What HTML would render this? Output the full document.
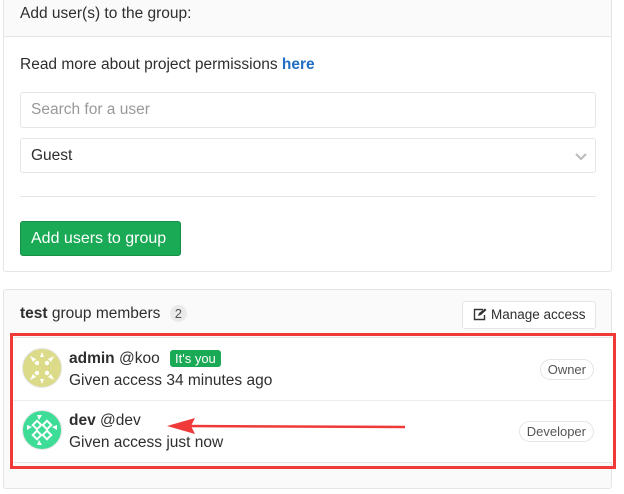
<!DOCTYPE html>
<html><head><style>
*{box-sizing:border-box;margin:0;padding:0}
body{width:624px;height:494px;background:#fff;font-family:"Liberation Sans",sans-serif;font-size:15.5px;color:#2e2e2e;position:relative;overflow:hidden}
.abs{position:absolute}
.card{position:absolute;left:3px;width:609px;border:1px solid #e5e5e5;border-radius:3px;background:#fff}
.hdr{background:#fafafa;border-bottom:1px solid #e5e5e5}
.inp{position:absolute;left:16px;width:576px;border:1px solid #e5e5e5;border-radius:3px;padding-left:10px;font-size:15.5px}
.badge{position:absolute;right:17px;border:1px solid #e5e5e5;border-radius:12px;font-size:13px;color:#555;padding:2px 7px;background:#fff}
</style></head><body>
<div class="card" style="top:-5px;height:277px">
  <div class="hdr" style="height:41px"><div class="abs" style="left:16px;top:9px">Add user(s) to the group:</div></div>
  <div class="abs" style="left:16px;top:60px">Read more about project permissions <b style="color:#1f6ec4">here</b></div>
  <div class="inp" style="top:96px;height:36px;line-height:34px;color:#999">Search for a user</div>
  <div class="inp" style="top:142px;height:35px;line-height:33px">Guest<svg class="abs" style="right:8px;top:13px" width="12" height="9" viewBox="0 0 12 9"><path d="M1 2l5 5 5-5" stroke="#bbb" stroke-width="2" fill="none"/></svg></div>
  <div class="abs" style="left:16px;top:200px;width:576px;border-top:1px solid #e5e5e5"></div>
  <div class="abs" style="left:16px;top:225px;width:161px;height:35px;background:#1aaa55;border:1px solid #168f48;border-radius:3px;color:#fff;line-height:33px;padding-left:10px;font-size:16px">Add users to group</div>
</div>
<div class="card" style="top:289px;height:200px;background:#fafafa">
  <div class="abs" style="left:16px;top:15px"><b>test</b> group members <span style="display:inline-block;background:#eaeaea;border-radius:9px;font-size:13px;padding:1px 5px;margin-left:5px;color:#555">2</span></div>
  <div class="abs" style="left:458px;top:11px;width:134px;height:28px;border:1px solid #e5e5e5;border-radius:3px;background:#fff;font-size:13.5px;line-height:26px;padding-left:28px">Manage access
    <svg class="abs" style="left:10px;top:6px" width="14" height="13" viewBox="0 0 14 13"><path d="M10 1.5H1.5v10h10V7" stroke="#333" stroke-width="1.4" fill="none"/><path d="M5 8l1-3 6-4.5 1.5 1.5L8 7z" fill="#333"/></svg></div>
  <div class="abs" style="left:8px;top:47px;width:600px;height:126px;background:#fff;border-top:1px solid #e5e5e5;border-bottom:1px solid #e5e5e5"></div>
  <div class="abs" style="left:8px;top:110px;width:600px;border-top:1px solid #ececec"></div>
</div>
<svg class="abs" style="left:22px;top:348px" width="40" height="40" viewBox="0 0 40 40"><circle cx="20" cy="20" r="19.5" fill="#dcdb8a" stroke="#e5e5e5"/><g fill="#fff"><circle cx="15" cy="15" r="2.2"/><circle cx="25" cy="15" r="2.2"/><circle cx="15" cy="25" r="2.2"/><circle cx="25" cy="25" r="2.2"/><path d="M8 8l6 3-3 3zM32 8l-6 3 3 3zM8 32l6-3-3-3zM32 32l-6-3 3-3zM20 4l2 5h-4zM20 36l2-5h-4z"/></g></svg>
<svg class="abs" style="left:22px;top:410px" width="40" height="40" viewBox="0 0 40 40"><circle cx="20" cy="20" r="19.5" fill="#3ddc97" stroke="#e5e5e5"/><g fill="none" stroke="#fff" stroke-width="2"><rect x="12" y="12" width="6" height="6" transform="rotate(45 15 15)"/><rect x="22" y="12" width="6" height="6" transform="rotate(45 25 15)"/><rect x="12" y="22" width="6" height="6" transform="rotate(45 15 25)"/><rect x="22" y="22" width="6" height="6" transform="rotate(45 25 25)"/></g><g fill="#fff"><path d="M5 15l5 2-5 3zM35 15l-5 2 5 3zM15 5l2 5 3-5zM15 35l2-5 3 5z"/></g></svg>
<div class="abs" style="left:69px;top:350px"><b>admin</b> @koo <span style="display:inline-block;background:#1aaa55;color:#fff;font-size:13px;padding:1px 5px;border-radius:3px;margin-left:6px">It's you</span></div>
<div class="abs" style="left:69px;top:372px">Given access 34 minutes ago</div>
<div class="badge" style="top:359px;right:30px">Owner</div>
<div class="abs" style="left:69px;top:412px"><b>dev</b> @dev</div>
<div class="abs" style="left:69px;top:434px">Given access just now</div>
<div class="badge" style="top:421px;right:30px">Developer</div>
<div class="abs" style="left:10px;top:333px;width:606px;height:136px;border:3px solid #f03a3a"></div>
<svg class="abs" style="left:165px;top:415px" width="245" height="20" viewBox="0 0 245 20"><path d="M20 11L240 12" stroke="#f03a3a" stroke-width="2.5"/><path d="M2 11L30 3L26 11L30 19z" fill="#f03a3a"/></svg>
</body></html>
